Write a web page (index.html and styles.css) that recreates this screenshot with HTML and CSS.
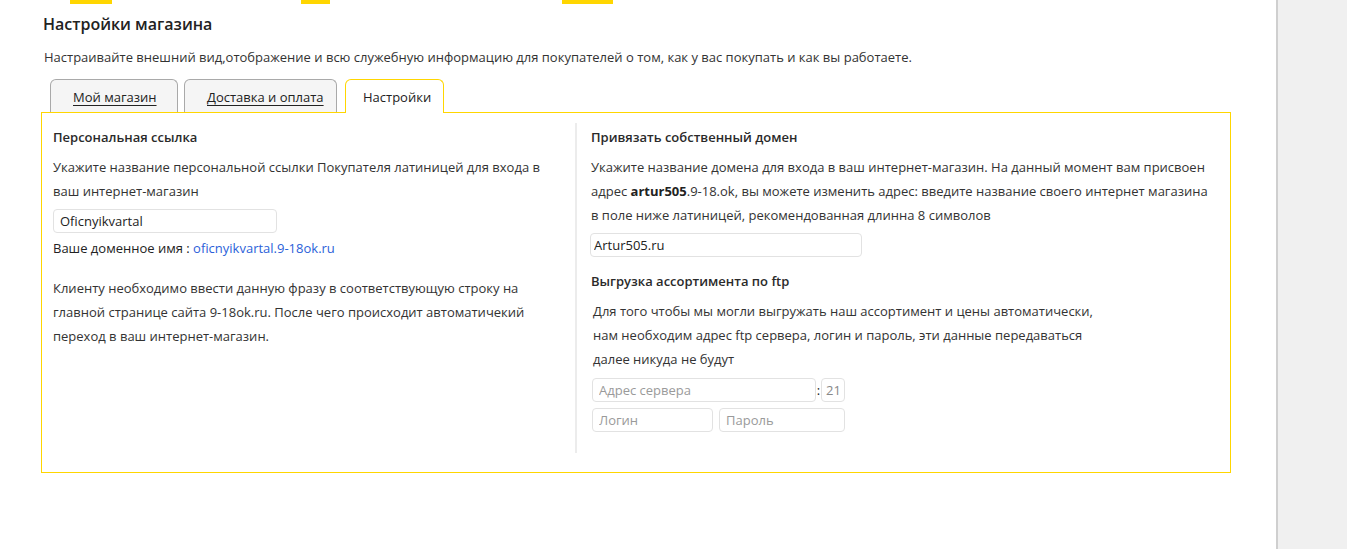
FILE: index.html
```html
<!DOCTYPE html>
<html lang="ru">
<head>
<meta charset="utf-8">
<title>Настройки магазина</title>
<link rel="stylesheet" href="styles.css">
</head>
<body>
<div class="layout">
  <main class="main">
    <div class="topbars">
      <span class="bar bar1"></span>
      <span class="bar bar2"></span>
      <span class="bar bar3"></span>
    </div>
    <h1 class="title">Настройки магазина</h1>
    <p class="lead">Настраивайте внешний вид,отображение и всю служебную информацию для покупателей о том, как у вас покупать и как вы работаете.</p>
    <div class="tabs">
      <a class="tab">Мой магазин</a>
      <a class="tab tab-wide">Доставка и оплата</a>
      <span class="tab tab-active">Настройки</span>
    </div>
    <section class="panel">
      <div class="col col-left">
        <h2 class="h">Персональная ссылка</h2>
        <p class="txt">Укажите название персональной ссылки Покупателя латиницей для входа в ваш интернет-магазин</p>
        <input class="field field-personal" type="text" value="Oficnyikvartal">
        <p class="domain">Ваше доменное имя : <a class="link">oficnyikvartal.9-18ok.ru</a></p>
        <p class="txt txt-note">Клиенту необходимо ввести данную фразу в соответствующую строку на главной странице сайта 9-18ok.ru. После чего происходит автоматичекий переход в ваш интернет-магазин.</p>
      </div>
      <div class="col col-right">
        <h2 class="h">Привязать собственный домен</h2>
        <p class="txt">Укажите название домена для входа в ваш интернет-магазин. На данный момент вам присвоен адрес <b>artur505</b>.9-18.ok, вы можете изменить адрес: введите название своего интернет магазина в поле ниже латиницей, рекомендованная длинна 8 символов</p>
        <input class="field field-domain" type="text" value="Artur505.ru">
        <h2 class="h h-ftp">Выгрузка ассортимента по ftp</h2>
        <p class="txt txt-ftp">Для того чтобы мы могли выгружать наш ассортимент и цены автоматически,<br>нам необходим адрес ftp сервера, логин и пароль, эти данные передаваться<br>далее никуда не будут</p>
        <div class="ftp-row">
          <input class="field field-server" type="text" placeholder="Адрес сервера">
          <span class="colon">:</span>
          <input class="field field-port" type="text" value="21">
        </div>
        <div class="ftp-row ftp-row2">
          <input class="field field-login" type="text" placeholder="Логин">
          <input class="field field-pass" type="text" placeholder="Пароль">
        </div>
      </div>
    </section>
  </main>
  <aside class="side"></aside>
</div>
</body>
</html>
```
FILE: styles.css
```css
* { box-sizing: border-box; }
html, body { margin: 0; padding: 0; }
body {
  font-family: "Open Sans", "Noto Sans", sans-serif;
  color: #333;
  background: #fff;
}
.layout {
  display: flex;
  height: 549px;
  overflow: hidden;
}
.main {
  width: 1278px;
  flex: none;
  padding: 0 0 0 41px;
  border-right: 2px solid #cfcfcf;
}
.side {
  flex: 1;
  background: #f0f0f0;
}
.topbars {
  display: flex;
  height: 4px;
  margin-left: 29px;
}
.bar { height: 4px; background: #ffd600; display: block; }
.bar1 { width: 42px; }
.bar2 { width: 29px; margin-left: 189px; }
.bar3 { width: 51px; margin-left: 232px; }
.title {
  margin: 9px 0 0 2px;
  font-size: 16px;
  font-weight: 600;
  color: #222;
  line-height: 22px;
}
.lead {
  margin: 12px 0 0 3px;
  font-size: 13px;
  line-height: 20px;
  color: #333;
}
.tabs {
  display: flex;
  margin: 12px 0 0 9px;
  height: 33px;
  align-items: flex-end;
}
.tab {
  display: block;
  flex: none;
  white-space: nowrap;
  height: 33px;
  padding: 8px 0 0 22px;
  border: 1px solid #a9a9a9;
  border-bottom: none;
  border-radius: 6px 6px 0 0;
  background: #f5f5f5;
  font-size: 13px;
  line-height: 18px;
  color: #222;
  text-decoration: underline;
  text-underline-offset: 3px;
  margin-right: 6px;
  width: 128px;
}
.tab-wide { width: 153px; margin-right: 8px; }
.tab-active {
  width: 99px;
  background: #fff;
  border-color: #ffd600;
  text-decoration: none;
  padding-left: 17px;
  height: 34px;
  margin-bottom: -1px;
  position: relative;
  z-index: 1;
}
.panel {
  display: flex;
  width: 1190px;
  height: 361px;
  border: 1px solid #ffd600;
  padding: 10px 0 19px 0;
}
.col { padding-top: 5px; }
.col-left {
  width: 535px;
  padding-left: 11px;
  padding-right: 18px;
  border-right: 2px solid #ececec;
}
.col-right {
  flex: 1;
  padding-left: 14px;
  padding-right: 18px;
}
.h {
  margin: 0;
  font-size: 13px;
  font-weight: 600;
  line-height: 18px;
  color: #2a2a2a;
}
.txt {
  margin: 9px 0 0 0;
  font-size: 13px;
  line-height: 24px;
  color: #333;
}
.txt b { font-weight: 700; color: #222; }
.field {
  display: block;
  height: 24px;
  border: 1px solid #e2e2e2;
  border-radius: 4px;
  font-family: "Open Sans", "Noto Sans", sans-serif;
  font-size: 13px;
  color: #222;
  padding: 0 6px;
  background: #fff;
  outline: none;
}
.field::placeholder { color: #9a9a9a; }
.field-personal { width: 224px; margin-top: 6px; }
.domain {
  margin: 3px 0 0 0;
  font-size: 13px;
  line-height: 24px;
  color: #222;
}
.link { color: #2b5fd9; text-decoration: none; }
.txt-note { margin-top: 16px; }
.field-domain { width: 272px; margin: 6px 0 0 -1px; padding: 0 3px; }
.h-ftp { margin-top: 15px; }
.txt-ftp { margin-left: 2px; margin-top: 9px; }
.ftp-row {
  display: flex;
  align-items: center;
  margin: 7px 0 0 1px;
}
.ftp-row2 { margin-top: 6px; }
.field-server { width: 224px; }
.colon { font-size: 13px; width: 5px; text-align: center; color: #222; }
.field-port { width: 24px; padding: 0 4px; margin-left: 0; color: #888; }
.field-login { width: 121px; }
.field-pass { width: 126px; margin-left: 6px; }
```
